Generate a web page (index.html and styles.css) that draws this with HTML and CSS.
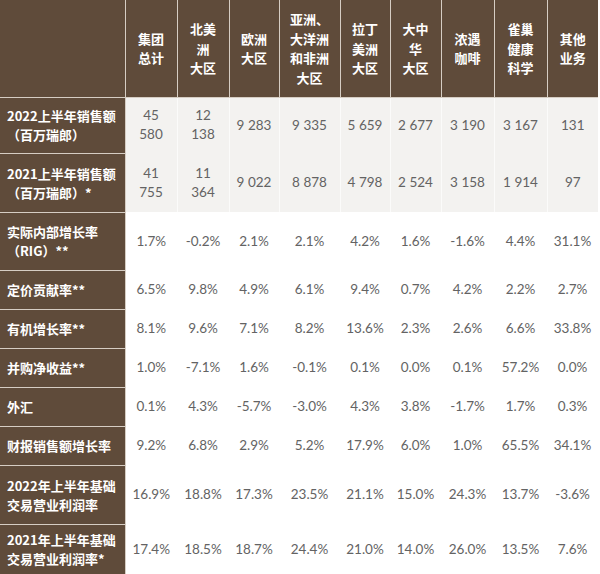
FILE: index.html
```html
<!DOCTYPE html>
<html lang="zh">
<head>
<meta charset="utf-8">
<link rel="stylesheet" href="styles.css">
</head>
<body>
<table class="sales">
  <colgroup>
    <col class="c-label">
    <col class="c52"><col class="c52"><col class="c50"><col class="c61"><col class="c50"><col class="c51"><col class="c53"><col class="c53"><col class="c51">
  </colgroup>
  <thead>
    <tr class="r-head">
      <th class="corner"></th>
      <th>集团<br>总计</th>
      <th>北美<br>洲<br>大区</th>
      <th>欧洲<br>大区</th>
      <th>亚洲、<br>大洋洲<br>和非洲<br>大区</th>
      <th>拉丁<br>美洲<br>大区</th>
      <th>大中<br>华<br>大区</th>
      <th>浓遇<br>咖啡</th>
      <th>雀巢<br>健康<br>科学</th>
      <th>其他<br>业务</th>
    </tr>
  </thead>
  <tbody>
    <tr class="r56 shade">
      <th class="label">2022上半年销售额<br>（百万瑞郎）</th>
      <td>45<br>580</td><td>12<br>138</td><td>9 283</td><td>9 335</td><td>5 659</td><td>2 677</td><td>3 190</td><td>3 167</td><td>131</td>
    </tr>
    <tr class="r59 shade">
      <th class="label">2021上半年销售额<br>（百万瑞郎）*</th>
      <td>41<br>755</td><td>11<br>364</td><td>9 022</td><td>8 878</td><td>4 798</td><td>2 524</td><td>3 158</td><td>1 914</td><td>97</td>
    </tr>
    <tr class="r58">
      <th class="label">实际内部增长率<br>（RIG）**</th>
      <td>1.7%</td><td>-0.2%</td><td>2.1%</td><td>2.1%</td><td>4.2%</td><td>1.6%</td><td>-1.6%</td><td>4.4%</td><td>31.1%</td>
    </tr>
    <tr class="r39">
      <th class="label">定价贡献率**</th>
      <td>6.5%</td><td>9.8%</td><td>4.9%</td><td>6.1%</td><td>9.4%</td><td>0.7%</td><td>4.2%</td><td>2.2%</td><td>2.7%</td>
    </tr>
    <tr class="r39">
      <th class="label">有机增长率**</th>
      <td>8.1%</td><td>9.6%</td><td>7.1%</td><td>8.2%</td><td>13.6%</td><td>2.3%</td><td>2.6%</td><td>6.6%</td><td>33.8%</td>
    </tr>
    <tr class="r39">
      <th class="label">并购净收益**</th>
      <td>1.0%</td><td>-7.1%</td><td>1.6%</td><td>-0.1%</td><td>0.1%</td><td>0.0%</td><td>0.1%</td><td>57.2%</td><td>0.0%</td>
    </tr>
    <tr class="r39">
      <th class="label">外汇</th>
      <td>0.1%</td><td>4.3%</td><td>-5.7%</td><td>-3.0%</td><td>4.3%</td><td>3.8%</td><td>-1.7%</td><td>1.7%</td><td>0.3%</td>
    </tr>
    <tr class="r39">
      <th class="label">财报销售额增长率</th>
      <td>9.2%</td><td>6.8%</td><td>2.9%</td><td>5.2%</td><td>17.9%</td><td>6.0%</td><td>1.0%</td><td>65.5%</td><td>34.1%</td>
    </tr>
    <tr class="r59">
      <th class="label">2022年上半年基础<br>交易营业利润率</th>
      <td>16.9%</td><td>18.8%</td><td>17.3%</td><td>23.5%</td><td>21.1%</td><td>15.0%</td><td>24.3%</td><td>13.7%</td><td>-3.6%</td>
    </tr>
    <tr class="r50">
      <th class="label">2021年上半年基础<br>交易营业利润率*</th>
      <td>17.4%</td><td>18.5%</td><td>18.7%</td><td>24.4%</td><td>21.0%</td><td>14.0%</td><td>26.0%</td><td>13.5%</td><td>7.6%</td>
    </tr>
  </tbody>
</table>
</body>
</html>
```

FILE: styles.css
```css
html, body {
  margin: 0;
  padding: 0;
  background: #ffffff;
}

body {
  font-family: Lato, "Noto Sans CJK SC", sans-serif;
}

.sales {
  border-collapse: collapse;
  table-layout: fixed;
  width: 598px;
}

.c-label { width: 125px; }
.c50 { width: 50px; }
.c51 { width: 51px; }
.c52 { width: 52px; }
.c53 { width: 53px; }
.c61 { width: 61px; }

.sales th,
.sales td {
  padding: 0;
  overflow: hidden;
}

.r-head { height: 97px; }
.r56 { height: 56px; }
.r58 { height: 58px; }
.r59 { height: 59px; }
.r50 { height: 50px; }
.r39 { height: 39px; }

.r-head th {
  background: #5f4b3a;
  color: #ffffff;
  font-family: "Noto Sans CJK SC", sans-serif;
  font-weight: 700;
  font-size: 13px;
  line-height: 19.5px;
  text-align: center;
  vertical-align: middle;
  border-right: 1px solid #d6cdc3;
  border-bottom: 1px solid #d6cdc3;
}

.r-head th:last-child {
  border-right: none;
}

.label {
  background: #5f4b3a;
  color: #ffffff;
  font-family: "Noto Sans CJK SC", sans-serif;
  font-weight: 700;
  font-size: 13px;
  line-height: 19px;
  text-align: left;
  vertical-align: middle;
  padding-left: 7px !important;
  border-right: 1px solid #d6cdc3;
  border-top: 1px solid #d6cdc3;
  white-space: nowrap;
}

.sales td {
  color: #636363;
  font-size: 13.5px;
  font-weight: 400;
  line-height: 19px;
  text-align: center;
  vertical-align: middle;
  white-space: nowrap;
}

.shade td {
  background: #f3f2f0;
  border-right: 1px solid #fbfbfa;
}

.shade td:last-child {
  border-right: none;
}
```
